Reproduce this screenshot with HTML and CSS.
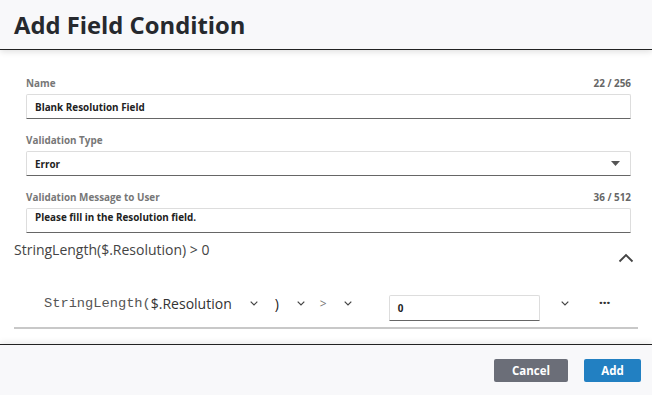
FILE: index.html
```html
<!DOCTYPE html>
<html lang="en">
<head>
    <meta charset="UTF-8">
    <title>Add Field Condition</title>
    <link rel="stylesheet" href="styles.css">
</head>
<body>
    <div class="dialog">
        <div class="dialog-header">
            <h1>Add Field Condition</h1>
        </div>

        <div class="dialog-body">
            <div class="form">
                <div class="field">
                    <div class="field-label"><span>Name</span><span class="counter">22 / 256</span></div>
                    <div class="input">Blank Resolution Field</div>
                </div>
                <div class="field">
                    <div class="field-label"><span>Validation Type</span></div>
                    <div class="input select">
                        <span>Error</span>
                        <svg class="caret" width="9" height="5" viewBox="0 0 9 5"><path d="M0 0h9L4.5 5z" fill="#555"/></svg>
                    </div>
                </div>
                <div class="field">
                    <div class="field-label"><span>Validation Message to User</span><span class="counter">36 / 512</span></div>
                    <div class="input textarea">Please fill in the Resolution field.</div>
                </div>
            </div>

            <div class="expression">
                <div class="expression-text">StringLength($.Resolution) &gt; 0</div>
                <svg class="collapse" width="16" height="10" viewBox="0 0 16 10"><path d="M1.5 8.5L8 2l6.5 6.5" fill="none" stroke="#444" stroke-width="1.8"/></svg>
            </div>

            <div class="condition-row">
                <span class="mono">StringLength(</span><span class="term">$.Resolution</span>
                <svg class="chev chev-1" width="8" height="5" viewBox="0 0 8 5"><path d="M0.7 0.7L4 4l3.3-3.3" fill="none" stroke="#444" stroke-width="1.2"/></svg>
                <span class="paren">)</span>
                <svg class="chev chev-2" width="8" height="5" viewBox="0 0 8 5"><path d="M0.7 0.7L4 4l3.3-3.3" fill="none" stroke="#444" stroke-width="1.2"/></svg>
                <span class="op">&gt;</span>
                <svg class="chev chev-3" width="8" height="5" viewBox="0 0 8 5"><path d="M0.7 0.7L4 4l3.3-3.3" fill="none" stroke="#444" stroke-width="1.2"/></svg>
                <div class="value-input">0</div>
                <svg class="chev chev-4" width="8" height="5" viewBox="0 0 8 5"><path d="M0.7 0.7L4 4l3.3-3.3" fill="none" stroke="#444" stroke-width="1.2"/></svg>
                <span class="more">&middot;&middot;&middot;</span>
            </div>
        </div>

        <div class="dialog-footer">
            <button class="btn btn-cancel">Cancel</button>
            <button class="btn btn-add">Add</button>
        </div>
    </div>
</body>
</html>
```

FILE: styles.css
```css
body {
    margin: 0;
    font-family: 'Open Sans', 'Liberation Sans', sans-serif;
    background: #ffffff;
    color: #333;
}
.dialog {
    width: 652px;
    height: 395px;
    display: flex;
    flex-direction: column;
    overflow: hidden;
}
.dialog-header {
    height: 49px;
    background-color: #f8f8fa;
    border-bottom: 1px solid #222;
    box-shadow: 0 2px 6px rgba(0, 0, 0, 0.12);
    display: flex;
    align-items: center;
    padding-left: 14px;
    position: relative;
    z-index: 1;
}
.dialog-header h1 {
    margin: 0;
    font-size: 23.8px;
    font-weight: 700;
    color: #26292e;
}
.dialog-body {
    flex: 1;
    display: flex;
    flex-direction: column;
    padding: 26px 14px 0 14px;
}
.form {
    display: flex;
    flex-direction: column;
    gap: 14px;
    padding: 0 7px 0 12px;
}
.field-label {
    display: flex;
    justify-content: space-between;
    height: 14px;
    line-height: 14px;
    font-size: 9.9px;
    font-weight: 700;
    color: #777;
    margin-bottom: 4px;
}
.counter {
    color: #666;
}
.input {
    height: 25px;
    box-sizing: border-box;
    border: 1px solid #ddd;
    border-bottom: 1px solid #666;
    border-radius: 2px 2px 0 0;
    padding: 0 8px;
    display: flex;
    align-items: center;
    font-size: 9.9px;
    font-weight: 700;
    color: #222;
}
.select {
    justify-content: space-between;
    padding-right: 10px;
}
.textarea {
    align-items: flex-start;
    padding-top: 1px;
}
.expression {
    display: flex;
    justify-content: space-between;
    align-items: flex-start;
    margin-top: 7px;
}
.expression-text {
    font-size: 14px;
    color: #444;
    line-height: 19px;
}
.collapse {
    margin-top: 13px;
    margin-right: 4px;
}
.condition-row {
    display: flex;
    align-items: center;
    height: 40px;
    margin-top: 20px;
    padding: 0 0 4px 30px;
    border-bottom: 2px solid #c8c8c8;
    font-size: 14px;
    color: #333;
}
.mono {
    font-family: 'Liberation Mono', 'Courier New', monospace;
    font-size: 13.7px;
    color: #555;
}
.term {
    color: #333;
}
.chev {
    flex-shrink: 0;
}
.chev-1 { margin-left: 18px; }
.paren { margin-left: 17px; color: #222; }
.chev-2 { margin-left: 18px; }
.op { margin-left: 15px; color: #777; font-size: 12px; }
.chev-3 { margin-left: 17px; }
.value-input {
    margin-left: 37px;
    margin-top: 9px;
    width: 151px;
    height: 26px;
    box-sizing: border-box;
    border: 1px solid #ddd;
    border-bottom: 1px solid #666;
    border-radius: 2px 2px 0 0;
    padding: 0 8px;
    display: flex;
    align-items: center;
    font-size: 9.9px;
    font-weight: 700;
    color: #222;
}
.chev-4 { margin-left: 21px; }
.more {
    margin-left: 30px;
    font-weight: 700;
    font-size: 15px;
    letter-spacing: -0.5px;
    color: #333;
    margin-top: -2px;
}
.dialog-footer {
    height: 50px;
    background-color: #f8f8fa;
    border-top: 1px solid #222;
    box-shadow: 0 -2px 6px rgba(0, 0, 0, 0.08);
    display: flex;
    justify-content: flex-end;
    align-items: center;
    gap: 16px;
    padding-right: 11px;
}
.btn {
    height: 23px;
    border: none;
    border-radius: 2px;
    color: #fff;
    font-family: 'Open Sans', sans-serif;
    font-size: 11.5px;
    font-weight: 700;
    cursor: pointer;
    padding: 0;
}
.btn-cancel {
    width: 74px;
    background-color: #6b6e78;
}
.btn-add {
    width: 57px;
    background-color: #2280c2;
}
```
